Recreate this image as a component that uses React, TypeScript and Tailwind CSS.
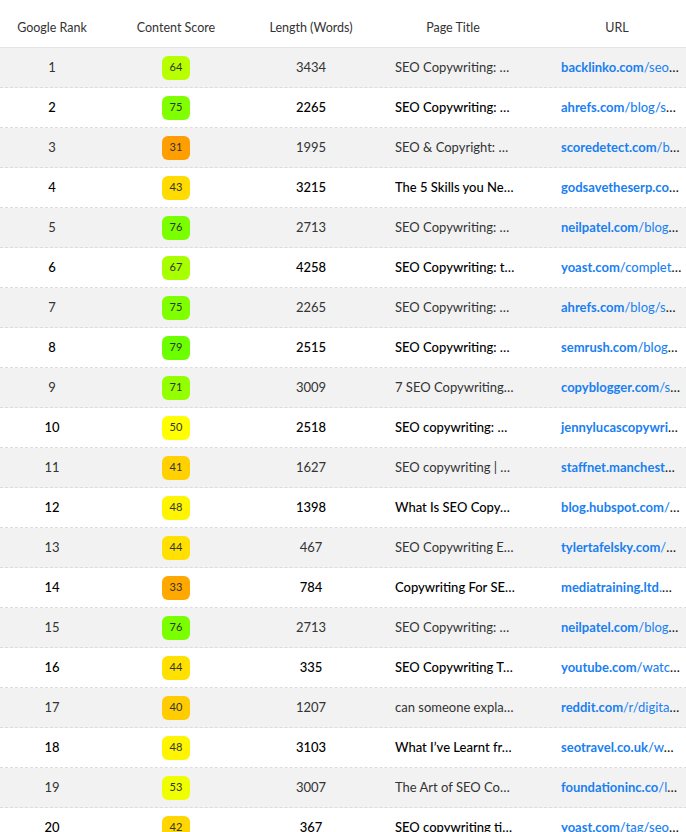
const rows = [
  { rank: 1, score: 64, bg: "bg-[#b8ff00]", words: 3434, title: "SEO Copywriting: …", domain: "backlinko.com", path: "/seo" },
  { rank: 2, score: 75, bg: "bg-[#80ff00]", words: 2265, title: "SEO Copywriting: …", domain: "ahrefs.com", path: "/blog/s" },
  { rank: 3, score: 31, bg: "bg-[#ff9e00]", words: 1995, title: "SEO & Copyright: …", domain: "scoredetect.com", path: "/b" },
  { rank: 4, score: 43, bg: "bg-[#ffdb00]", words: 3215, title: "The 5 Skills you Ne…", domain: "godsavetheserp.co", path: "" },
  { rank: 5, score: 76, bg: "bg-[#7aff00]", words: 2713, title: "SEO Copywriting: …", domain: "neilpatel.com", path: "/blog" },
  { rank: 6, score: 67, bg: "bg-[#a8ff00]", words: 4258, title: "SEO Copywriting: t…", domain: "yoast.com", path: "/complet" },
  { rank: 7, score: 75, bg: "bg-[#80ff00]", words: 2265, title: "SEO Copywriting: …", domain: "ahrefs.com", path: "/blog/s" },
  { rank: 8, score: 79, bg: "bg-[#6bff00]", words: 2515, title: "SEO Copywriting: …", domain: "semrush.com", path: "/blog" },
  { rank: 9, score: 71, bg: "bg-[#94ff00]", words: 3009, title: "7 SEO Copywriting…", domain: "copyblogger.com", path: "/s" },
  { rank: 10, score: 50, bg: "bg-[#ffff00]", words: 2518, title: "SEO copywriting: …", domain: "jennylucascopywri", path: "" },
  { rank: 11, score: 41, bg: "bg-[#ffd100]", words: 1627, title: "SEO copywriting | …", domain: "staffnet.manchest", path: "" },
  { rank: 12, score: 48, bg: "bg-[#fff500]", words: 1398, title: "What Is SEO Copy…", domain: "blog.hubspot.com", path: "/" },
  { rank: 13, score: 44, bg: "bg-[#ffe000]", words: 467, title: "SEO Copywriting E…", domain: "tylertafelsky.com", path: "/" },
  { rank: 14, score: 33, bg: "bg-[#ffa800]", words: 784, title: "Copywriting For SE…", domain: "mediatraining.ltd", path: "." },
  { rank: 15, score: 76, bg: "bg-[#7aff00]", words: 2713, title: "SEO Copywriting: …", domain: "neilpatel.com", path: "/blog" },
  { rank: 16, score: 44, bg: "bg-[#ffe000]", words: 335, title: "SEO Copywriting T…", domain: "youtube.com", path: "/watc" },
  { rank: 17, score: 40, bg: "bg-[#ffcc00]", words: 1207, title: "can someone expla…", domain: "reddit.com", path: "/r/digita" },
  { rank: 18, score: 48, bg: "bg-[#fff500]", words: 3103, title: "What I’ve Learnt fr…", domain: "seotravel.co.uk", path: "/w" },
  { rank: 19, score: 53, bg: "bg-[#f0ff00]", words: 3007, title: "The Art of SEO Co…", domain: "foundationinc.co", path: "/l" },
  { rank: 20, score: 42, bg: "bg-[#ffd600]", words: 367, title: "SEO copywriting ti…", domain: "yoast.com", path: "/tag/seo" },
];

export default function App() {
  return (
    <div className="h-[832px] w-[686px] overflow-hidden bg-white font-['Lato','Liberation_Sans',sans-serif] text-[13px]">
      <div className="w-[702px]">
        <div className="flex h-[48px] items-center border-b border-[#e4e4e4] pt-[10px] text-[12.5px] text-[#333]">
          <div className="w-[104px] text-center">Google Rank</div>
          <div className="w-[144px] text-center">Content Score</div>
          <div className="w-[126px] text-center">Length (Words)</div>
          <div className="w-[158px] text-center">Page Title</div>
          <div className="w-[170px] text-center">URL</div>
        </div>
        {rows.map((r) => {
          const grey = r.rank % 2 === 1;
          return (
            <div
              key={r.rank}
              className={
                grey
                  ? "flex h-[40px] items-center border-b border-dashed border-[#dcdcdc] bg-[#f2f2f2] text-[#333]"
                  : "flex h-[40px] items-center border-b border-dashed border-[#dcdcdc] bg-white font-medium text-black"
              }
            >
              <div className="w-[104px] text-center">{r.rank}</div>
              <div className="flex w-[144px] justify-center">
                <span
                  className={`flex h-[24px] w-[28px] items-center justify-center rounded-[6px] text-[11px] font-normal text-[#333] ${r.bg}`}
                >
                  {r.score}
                </span>
              </div>
              <div className="w-[126px] text-center">{r.words}</div>
              <div className="w-[158px] whitespace-nowrap pl-[21px]">{r.title}</div>
              <div className="w-[170px] whitespace-nowrap pl-[29px]">
                <a className="text-[#1a7ff0]">
                  <span className="font-bold">{r.domain}</span>
                  <span>{r.path}</span>
                </a>
                <span className="text-[#111]">…</span>
              </div>
            </div>
          );
        })}
      </div>
    </div>
  );
}
